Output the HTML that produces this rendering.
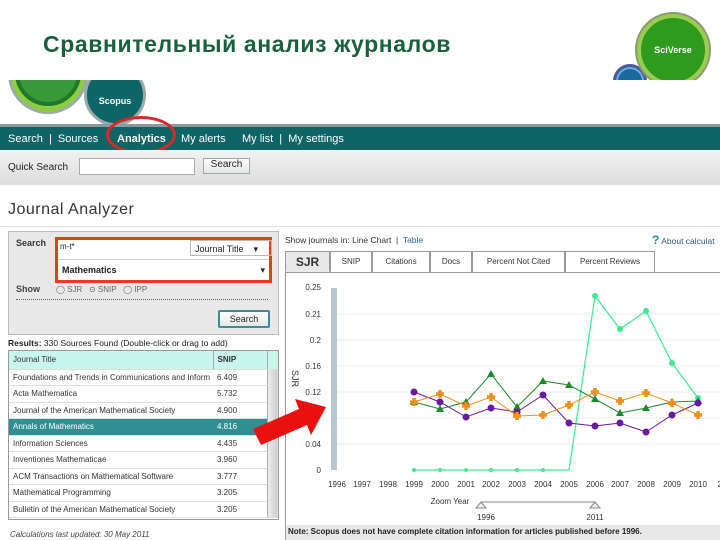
<!DOCTYPE html>
<html><head><meta charset="utf-8"><style>
*{margin:0;padding:0;box-sizing:border-box}
body{width:720px;height:540px;overflow:hidden;background:#fff;font-family:"Liberation Sans",sans-serif;position:relative;font-size:9px;color:#222}
.a{position:absolute}
.title{left:43px;top:31px;font-size:23px;font-weight:bold;color:#1a6040;font-family:"Liberation Sans",sans-serif;letter-spacing:0.6px;white-space:nowrap}
.nav{left:0;top:124px;width:720px;height:26px;background:#0f6466;border-top:3px solid #8a9aa0;color:#fff;font-size:11px}
.nav span{position:absolute;top:6px}
.qs{left:0;top:150px;width:720px;height:35px;background:linear-gradient(#f2f2f2,#dcdcdc)}
.btn{background:linear-gradient(#fff,#e6e6e6);border:1px solid #9aa;font-size:10px;text-align:center}
td{height:16.5px;padding-left:4px;font-size:8px;color:#333;border-bottom:1px solid #ddd;white-space:nowrap;overflow:hidden}
table{border-collapse:collapse;table-layout:fixed}
.tab{position:absolute;top:251px;height:21px;border:1px solid #999;border-bottom:none;background:#fff;font-size:8px;text-align:center;line-height:20px;color:#333}
</style></head><body>
<div class="a title">Сравнительный анализ журналов</div>
<!-- scopus logos clipped -->
<div class="a" style="left:0;top:80px;width:300px;height:46px;overflow:hidden">
<div class="a" style="left:8px;top:-46px;width:80px;height:80px;border-radius:50%;background:#8ccf3a;border:3px solid #9aa"></div>
<div class="a" style="left:15px;top:-40px;width:66px;height:66px;border-radius:50%;background:#3a9a3a;border:4px solid #1e7a2a"></div>
<div class="a" style="left:84px;top:-16px;width:62px;height:62px;border-radius:50%;background:#0f6466;border:3px solid #9aa;color:#fff;font-size:9px;font-weight:bold;text-align:center;line-height:52px;padding-top:8px">Scopus</div>
</div>
<!-- sciverse clipped -->
<div class="a" style="left:600px;top:0;width:120px;height:80px;overflow:hidden">
<div class="a" style="left:13px;top:64px;width:34px;height:34px;border-radius:50%;background:#1a6aa0;border:3px solid #4a5a9a;box-shadow:inset 0 0 0 2px #6ab0e0"></div>
<div class="a" style="left:37px;top:14px;width:72px;height:72px;border-radius:50%;background:#2e9a1e;border:4px solid #9acc50;box-shadow:0 0 0 2px #8a9a70;color:#fff;font-size:9px;font-weight:bold;text-align:center;line-height:64px">SciVerse</div>
</div>
<div class="a nav"><span style="left:8px">Search &nbsp;|&nbsp; Sources</span><span style="left:117px;font-weight:bold">Analytics</span><span style="left:181px">My alerts</span><span style="left:242px">My list &nbsp;|&nbsp; My settings</span></div>
<div class="a" style="left:106px;top:116px;width:70px;height:38px;border:3px solid #d82828;border-radius:50%"></div>
<div class="a qs"><span class="a" style="left:8px;top:12px;font-size:10px">Quick Search</span>
<div class="a" style="left:79px;top:8px;width:116px;height:17px;background:#fff;border:1px solid #aaa"></div>
<div class="a btn" style="left:203px;top:8px;width:47px;height:16px">Search</div></div>
<div class="a" style="left:8px;top:201px;font-size:16px;color:#333;letter-spacing:0.5px">Journal Analyzer</div>
<div class="a" style="left:0;top:226px;width:720px;height:1px;background:#e4e4e4"></div>
<!-- left panel -->
<div class="a" style="left:8px;top:231px;width:271px;height:104px;background:#e8e8e8;border:1px solid #bbb"></div>
<span class="a" style="left:16px;top:238px;font-size:9px;font-weight:bold;color:#333">Search</span>
<div class="a" style="left:55px;top:237px;width:217px;height:46px;border:3px solid #e0401a;background:#fff"></div>
<div class="a" style="left:58px;top:240px;width:124px;height:15px;background:#fff;font-size:8px;padding:2px">m-t*</div>
<div class="a" style="left:190px;top:240px;width:82px;height:16px;border:1px solid #bbb;font-size:9px;padding:3px 4px">Journal Title &nbsp;&nbsp;&nbsp;▾</div>
<div class="a" style="left:58px;top:259px;width:211px;height:21px;border-top:1px solid #ccc;font-size:9px;font-weight:bold;padding:5px 4px">Mathematics<span style="float:right;font-weight:normal">▾</span></div>
<span class="a" style="left:16px;top:284px;font-size:9px;font-weight:bold;color:#444">Show</span>
<div class="a" style="left:56px;top:285px;font-size:8px;color:#666">◯ SJR &nbsp; ⊙ SNIP &nbsp; ◯ IPP</div>
<div class="a" style="left:16px;top:299px;width:252px;border-top:1px dotted #666"></div>
<div class="a btn" style="left:218px;top:310px;width:52px;height:18px;border:2px solid #3a8aa0;border-radius:2px;font-size:9px;line-height:14px">Search</div>
<div class="a" style="left:8px;top:338px;font-size:8.5px"><b>Results:</b> 330 Sources Found (Double-click or drag to add)</div>
<div class="a" style="left:8px;top:350px;width:271px;height:170px;border:1px solid #999;overflow:hidden">
<table style="width:269px">
<colgroup><col style="width:204px"><col style="width:54px"><col style="width:11px"></colgroup>
<tr style="background:#c8f5ec"><td style="height:18px">Journal Title</td><td style="border-left:1px solid #aaa;font-weight:bold">SNIP</td><td style="border-left:1px solid #aaa"></td></tr>
<tr><td>Foundations and Trends in Communications and Inform</td><td>6.409</td><td rowspan="9" style="background:linear-gradient(90deg,#eee,#ccc);border-left:1px solid #aaa"></td></tr>
<tr><td>Acta Mathematica</td><td>5.732</td></tr>
<tr><td>Journal of the American Mathematical Society</td><td>4.900</td></tr>
<tr style="background:#2e9090"><td style="color:#fff">Annals of Mathematics</td><td style="color:#fff">4.816</td></tr>
<tr><td>Information Sciences</td><td>4.435</td></tr>
<tr><td>Inventiones Mathematicae</td><td>3.960</td></tr>
<tr><td>ACM Transactions on Mathematical Software</td><td>3.777</td></tr>
<tr><td>Mathematical Programming</td><td>3.205</td></tr>
<tr><td>Bulletin of the American Mathematical Society</td><td>3.205</td></tr>
<tr><td>Mathematical Finance</td><td>3.011</td><td></td></tr>
</table></div>
<div class="a" style="left:10px;top:530px;font-size:8px;font-style:italic;color:#444">Calculations last updated: 30 May 2011</div>
<!-- right -->
<div class="a" style="left:285px;top:235px;font-size:8.5px;color:#333">Show journals in: Line Chart &nbsp;|&nbsp; <span style="color:#2a6a8a">Table</span></div>
<div class="a" style="left:652px;top:233px;font-size:8.5px;color:#2a5a7a"><b style="color:#2a8a90;font-size:12px">?</b> About calculat</div>
<div class="a" style="left:285px;top:272px;width:435px;height:1px;background:#999"></div>
<div class="a" style="left:285px;top:272px;width:1px;height:268px;background:#999"></div>
<div class="tab" style="left:285px;width:45px;background:#e8e8e8;font-size:12px;font-weight:bold;border-bottom:1px solid #e8e8e8">SJR</div>
<div class="tab" style="left:330px;width:42px">SNIP</div>
<div class="tab" style="left:372px;width:58px">Citations</div>
<div class="tab" style="left:430px;width:42px">Docs</div>
<div class="tab" style="left:472px;width:93px">Percent Not Cited</div>
<div class="tab" style="left:565px;width:90px">Percent Reviews</div>
<svg class="a" style="left:0;top:0" width="720" height="540">
<rect x="331" y="288" width="6" height="182" fill="#b8c6d2"/>
<g stroke="#eee" stroke-width="1">
<line x1="337" y1="314" x2="720" y2="314"/><line x1="337" y1="340" x2="720" y2="340"/><line x1="337" y1="366" x2="720" y2="366"/><line x1="337" y1="392" x2="720" y2="392"/><line x1="337" y1="418" x2="720" y2="418"/><line x1="337" y1="444" x2="720" y2="444"/></g>
<g font-size="8" fill="#333" text-anchor="end" font-family="Liberation Sans">
<text x="321" y="290">0.25</text><text x="321" y="317">0.21</text><text x="321" y="343">0.2</text><text x="321" y="369">0.16</text><text x="321" y="395">0.12</text><text x="321" y="447">0.04</text><text x="321" y="473">0</text></g>
<text x="292" y="370" font-size="9" fill="#333" transform="rotate(90 292 370)" font-family="Liberation Sans">SJR</text>
<g font-size="8" fill="#333" text-anchor="middle" font-family="Liberation Sans">
<text x="337" y="487">1996</text><text x="362" y="487">1997</text><text x="388" y="487">1998</text><text x="414" y="487">1999</text><text x="440" y="487">2000</text><text x="466" y="487">2001</text><text x="491" y="487">2002</text><text x="517" y="487">2003</text><text x="543" y="487">2004</text><text x="569" y="487">2005</text><text x="595" y="487">2006</text><text x="620" y="487">2007</text><text x="646" y="487">2008</text><text x="672" y="487">2009</text><text x="698" y="487">2010</text><text x="722" y="487">20</text>
<text x="450" y="504">Zoom Year</text><text x="486" y="520">1996</text><text x="595" y="520">2011</text></g>
<line x1="481" y1="502" x2="595" y2="502" stroke="#888"/>
<path d="M481 502l-5 6h10z M595 502l-5 6h10z" fill="#eee" stroke="#888"/>
<polyline fill="none" stroke="#40e890" stroke-width="1.2" points="414,470 440,470 466,470 491,470 517,470 543,470 569,470 595,296 620,329 646,311 672,363 698,398"/>
<g fill="#40e890"><circle cx="414" cy="470" r="2"/><circle cx="440" cy="470" r="2"/><circle cx="466" cy="470" r="2"/><circle cx="491" cy="470" r="2"/><circle cx="517" cy="470" r="2"/><circle cx="543" cy="470" r="2"/><circle cx="595" cy="296" r="3"/><circle cx="620" cy="329" r="3"/><circle cx="646" cy="311" r="3"/><circle cx="672" cy="363" r="3"/><circle cx="698" cy="398" r="3"/></g>
<polyline fill="none" stroke="#1a8a2a" stroke-width="1" points="414,402 440,409 466,402 491,374 517,407 543,381 569,385 595,399 620,413 646,408 672,402 698,401"/>
<g fill="#1a8a2a"><path d="M414 398l4 7h-8zM440 405l4 7h-8zM466 398l4 7h-8zM491 370l4 7h-8zM517 403l4 7h-8zM543 377l4 7h-8zM569 381l4 7h-8zM595 395l4 7h-8zM620 409l4 7h-8zM646 404l4 7h-8zM672 398l4 7h-8zM698 397l4 7h-8z"/></g>
<polyline fill="none" stroke="#6a1aa0" stroke-width="1" points="414,392 440,402 466,417 491,408 517,412 543,395 569,423 595,426 620,423 646,432 672,415 698,403"/>
<g fill="#6a1aa0"><circle cx="414" cy="392" r="3.5"/><circle cx="440" cy="402" r="3.5"/><circle cx="466" cy="417" r="3.5"/><circle cx="491" cy="408" r="3.5"/><circle cx="517" cy="412" r="3.5"/><circle cx="543" cy="395" r="3.5"/><circle cx="569" cy="423" r="3.5"/><circle cx="595" cy="426" r="3.5"/><circle cx="620" cy="423" r="3.5"/><circle cx="646" cy="432" r="3.5"/><circle cx="672" cy="415" r="3.5"/><circle cx="698" cy="403" r="3.5"/></g>
<polyline fill="none" stroke="#f0901a" stroke-width="1" points="414,402 440,394 466,406 491,397 517,416 543,415 569,405 595,392 620,401 646,393 672,403 698,415"/>
<g stroke="#f0901a" stroke-width="3.5"><path d="M410 402h8M414 398v8M436 394h8M440 390v8M462 406h8M466 402v8M487 397h8M491 393v8M513 416h8M517 412v8M539 415h8M543 411v8M565 405h8M569 401v8M591 392h8M595 388v8M616 401h8M620 397v8M642 393h8M646 389v8M668 403h8M672 399v8M694 415h8M698 411v8"/></g>
<polygon fill="#e81010" points="253,429 299,409 295,399 326,407 311,435 307,425 261,445"/>
</svg>
<div class="a" style="left:286px;top:525px;width:434px;height:15px;background:#e8e8e8;font-size:8px;font-weight:bold;color:#222;padding:2px 2px">Note: Scopus does not have complete citation information for articles published before 1996.</div>
</body></html>
